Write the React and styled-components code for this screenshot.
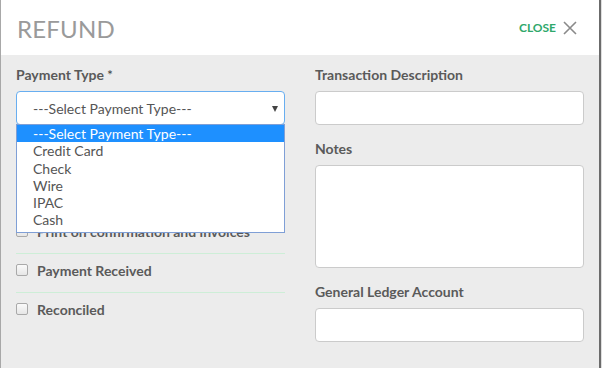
import React from "react";
import styled, { createGlobalStyle } from "styled-components";

const GlobalStyle = createGlobalStyle`
  body {
    margin: 0;
    background: #dedede;
    font-family: Lato, "Open Sans", sans-serif;
  }
`;

const Modal = styled.div`
  width: 598px;
  height: 368px;
  background: #ececec;
  border-left: 1px solid #a8a8a8;
  border-right: 2px solid #6b6b6b;
  display: flex;
  flex-direction: column;
  overflow: hidden;
`;

const Header = styled.div`
  height: 55px;
  flex-shrink: 0;
  background: #fff;
  display: flex;
  align-items: center;
  justify-content: space-between;
  padding: 0 22px 0 16px;
`;

const Title = styled.div`
  font-size: 24px;
  color: #9a9a9a;
  letter-spacing: 0.2px;
  padding-top: 1px;
`;

const CloseButton = styled.button`
  display: flex;
  align-items: center;
  gap: 7px;
  border: none;
  background: none;
  padding: 0;
  font-family: inherit;
  font-size: 12px;
  font-weight: 700;
  color: #2fa86b;
  cursor: pointer;
`;

const Body = styled.div`
  display: grid;
  grid-template-columns: 269px 269px;
  column-gap: 30px;
  padding: 10px 0 0 15px;
`;

const Column = styled.div`
  display: flex;
  flex-direction: column;
`;

const Group = styled.div`
  margin-bottom: 14px;
  position: relative;
`;

const Label = styled.div`
  font-size: 14px;
  font-weight: 700;
  line-height: 20px;
  color: #5a5a5a;
  margin-bottom: 6px;
`;

const Required = styled.span`
  font-weight: 400;
  color: #444;
  margin-left: 3px;
`;

const Input = styled.div`
  box-sizing: border-box;
  height: ${({ $h }) => $h || 34}px;
  background: #fff;
  border: 1px solid ${({ $focus }) => ($focus ? "#68aef0" : "#cbcbcb")};
  border-radius: 4px;
`;

const SelectBox = styled(Input)`
  display: flex;
  align-items: center;
  justify-content: space-between;
  padding: 0 6px 0 16px;
  font-size: 14px;
  color: #555;
`;

const Arrow = styled.span`
  width: 0;
  height: 0;
  border-left: 3.5px solid transparent;
  border-right: 3.5px solid transparent;
  border-top: 6px solid #444;
  margin-top: 1px;
`;

const Menu = styled.div`
  position: absolute;
  left: 0;
  right: 0;
  top: calc(100% - 1px);
  z-index: 5;
  background: #fff;
  border: 1px solid #7f9fd6;
  padding-bottom: 3px;
`;

const Option = styled.div`
  height: 17.3px;
  line-height: 17.3px;
  padding-left: 16px;
  font-size: 14px;
  color: ${({ $active }) => ($active ? "#fff" : "#555")};
  background: ${({ $active }) => ($active ? "#1e90ff" : "transparent")};
`;

const Checks = styled.div`
  margin-top: 76px;
`;

const CheckRow = styled.div`
  display: flex;
  align-items: center;
  gap: 9px;
  padding: 7px 0 11px;
  line-height: 20px;
  font-size: 14px;
  font-weight: 700;
  color: #5a5a5a;
  border-bottom: 1px solid #cdeed7;
  &:last-child {
    border-bottom: none;
  }
`;

const Box = styled.span`
  box-sizing: border-box;
  width: 12px;
  height: 12px;
  border: 1px solid #a9a9a9;
  border-radius: 2px;
  background: linear-gradient(#fafafa, #e6e6e6);
  margin-top: -3px;
`;

const options = ["---Select Payment Type---", "Credit Card", "Check", "Wire", "IPAC", "Cash"];
const checks = ["Print on confirmation and invoices", "Payment Received", "Reconciled"];

const App = () => {
  return (
    <>
      <GlobalStyle />
      <Modal>
        <Header>
          <Title>REFUND</Title>
          <CloseButton>
            CLOSE
            <svg width="14" height="14" viewBox="0 0 14 14">
              <path d="M1 1L13 13M13 1L1 13" stroke="#8a8a8a" strokeWidth="1.6" />
            </svg>
          </CloseButton>
        </Header>
        <Body>
          <Column>
            <Group>
              <Label>
                Payment Type<Required>*</Required>
              </Label>
              <SelectBox $focus>
                ---Select Payment Type---
                <Arrow />
              </SelectBox>
              <Menu>
                {options.map((o, i) => (
                  <Option key={o} $active={i === 0}>
                    {o}
                  </Option>
                ))}
              </Menu>
            </Group>
            <Checks>
              {checks.map((c) => (
                <CheckRow key={c}>
                  <Box />
                  {c}
                </CheckRow>
              ))}
            </Checks>
          </Column>
          <Column>
            <Group>
              <Label>Transaction Description</Label>
              <Input />
            </Group>
            <Group>
              <Label>Notes</Label>
              <Input $h={103} />
            </Group>
            <Group>
              <Label>General Ledger Account</Label>
              <Input />
            </Group>
          </Column>
        </Body>
      </Modal>
    </>
  );
};

export default App;
